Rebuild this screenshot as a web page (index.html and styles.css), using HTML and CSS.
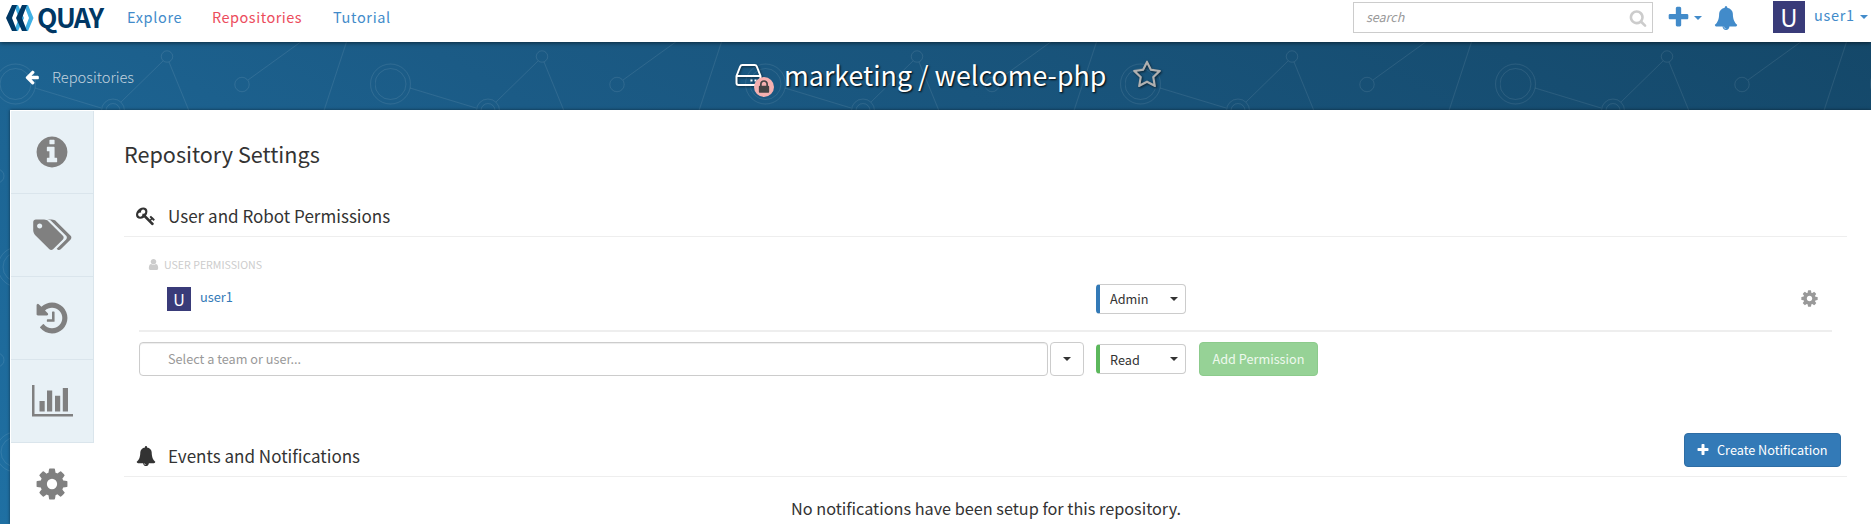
FILE: index.html
```html
<!DOCTYPE html>
<html lang="en">
<head>
<meta charset="utf-8">
<title>marketing / welcome-php</title>
<link rel="stylesheet" href="styles.css">
</head>
<body>
<svg class="defs" width="0" height="0">
  <symbol id="info" viewBox="0 0 1792 1792"><path d="M1152 1376v-160q0-14-9-23t-23-9h-96v-512q0-14-9-23t-23-9h-320q-14 0-23 9t-9 23v160q0 14 9 23t23 9h96v320h-96q-14 0-23 9t-9 23v160q0 14 9 23t23 9h448q14 0 23-9t9-23zm-128-896v-160q0-14-9-23t-23-9h-192q-14 0-23 9t-9 23v160q0 14 9 23t23 9h192q14 0 23-9t9-23zm640 416q0 209-103 385.5t-279.5 279.5-385.5 103-385.5-103-279.5-279.5-103-385.5 103-385.5 279.5-279.5 385.5-103 385.5 103 279.5 279.5 103 385.5z"/></symbol>
  <symbol id="tags" viewBox="0 0 1920 1792"><path d="M448 448q0-53-37.500-90.500t-90.500-37.500-90.500 37.500-37.500 90.500 37.500 90.500 90.500 37.500 90.500-37.500 37.500-90.500zm1067 576q0 53-37 90l-491 492q-39 37-91 37-53 0-90-37l-715-716q-38-37-64.500-101t-26.500-117v-416q0-52 38-90t90-38h416q53 0 117 26.500t102 64.500l715 714q37 39 37 91zm384 0q0 53-37 90l-491 492q-39 37-91 37-36 0-59-14t-53-45l470-470q37-37 37-90 0-52-37-91l-715-714q-38-38-102-64.500t-117-26.500h224q53 0 117 26.500t102 64.500l715 714q37 39 37 91z"/></symbol>
  <symbol id="history" viewBox="0 0 1792 1792"><path d="M1664 896q0 156-61 298t-164 245-245 164-298 61q-172 0-327-72.500t-264-204.500q-7-10-6.500-22.500t8.500-20.500l137-138q10-9 25-9 16 2 23 12 73 95 179 147t225 52q104 0 198.500-40.500t163.500-109.500 109.500-163.500 40.500-198.500-40.500-198.500-109.500-163.500-163.500-109.500-198.500-40.500q-98 0-188 35.500t-160 101.500l137 138q31 30 14 69-17 40-59 40h-448q-26 0-45-19t-19-45v-448q0-42 40-59 39-17 69 14l130 129q107-101 244.500-156.500t284.500-55.500q156 0 298 61t245 164 164 245 61 298zm-640-288v448q0 14-9 23t-23 9h-320q-14 0-23-9t-9-23v-64q0-14 9-23t23-9h224v-352q0-14 9-23t23-9h64q14 0 23 9t9 23z"/></symbol>
  <symbol id="chart" viewBox="0 0 41 32"><path d="M0 0h2.500v29h38.500v2.500h-41zM7.500 16h5.200v10.500h-5.200zM15 5.500h5.200v21h-5.200zM23 10.800h5.200v15.700h-5.200zM30.800 3h5.200v23.500h-5.200z"/></symbol>
  <symbol id="cog" viewBox="0 0 1792 1792"><path d="M1152 896q0-106-75-181t-181-75-181 75-75 181 75 181 181 75 181-75 75-181zm512-109v222q0 12-8 23t-20 13l-185 28q-19 54-39 91 35 50 107 138 10 12 10 25t-9 23q-27 37-99 108t-94 71q-12 0-26-9l-138-108q-44 23-91 38-16 136-29 186-7 28-36 28h-222q-14 0-24.500-8.500t-11.500-21.500l-28-184q-49-16-90-37l-141 107q-10 9-25 9-14 0-25-11-126-114-165-168-7-10-7-23 0-12 8-23 15-21 51-66.500t54-70.500q-27-50-41-99l-183-27q-13-2-21-12.500t-8-23.500v-222q0-12 8-23t19-13l186-28q14-46 39-92-40-57-107-138-10-12-10-24 0-10 9-23 26-36 98.500-107.500t94.500-71.500q13 0 26 10l138 107q44-23 91-38 16-136 29-186 7-28 36-28h222q14 0 24.500 8.500t11.500 21.500l28 184q49 16 90 37l142-107q9-9 24-9 13 0 25 10 129 119 165 170 7 8 7 22 0 12-8 23-15 21-51 66.500t-54 70.500q26 50 41 98l183 28q13 2 21 12.500t8 23.500z"/></symbol>
  <symbol id="bell" viewBox="0 0 1792 1792"><path d="M912 1696q0-16-16-16-59 0-101.500-42.500t-42.500-101.500q0-16-16-16t-16 16q0 73 51.500 124.500t124.500 51.500q16 0 16-16zm816-288q0 52-38 90t-90 38h-448q0 106-75 181t-181 75-181-75-75-181h-448q-52 0-90-38t-38-90q50-42 91-88t85-119.500 74.500-158.500 50-206 19.500-260q0-152 117-282.500t307-158.500q-8-19-8-39 0-40 28-68t68-28 68 28 28 68q0 20-8 39 190 28 307 158.500t117 282.500q0 139 19.500 260t50 206 74.500 158.500 85 119.500 91 88z"/></symbol>
  <symbol id="plus" viewBox="0 0 1792 1792"><path d="M1600 736v192q0 40-28 68t-68 28h-416v416q0 40-28 68t-68 28h-192q-40 0-68-28t-28-68v-416h-416q-40 0-68-28t-28-68v-192q0-40 28-68t68-28h416v-416q0-40 28-68t68-28h192q40 0 68 28t28 68v416h416q40 0 68 28t28 68z"/></symbol>
  <symbol id="user" viewBox="0 0 1792 1792"><path d="M1536 1399q0 109-62.500 187t-150.500 78h-854q-88 0-150.500-78t-62.500-187q0-85 8.500-160.500t31.500-152 58.500-131 94-89 134.500-34.500q131 128 313 128t313-128q76 0 134.500 34.500t94 89 58.500 131 31.500 152 8.500 160.500zm-256-887q0 159-112.500 271.500t-271.500 112.500-271.500-112.500-112.500-271.500 112.500-271.500 271.500-112.500 271.500 112.500 112.500 271.500z"/></symbol>
  <symbol id="search" viewBox="0 0 1792 1792"><path d="M1216 832q0-185-131.500-316.500t-316.500-131.500-316.500 131.500-131.500 316.500 131.500 316.500 316.500 131.500 316.500-131.500 131.500-316.500zm512 832q0 52-38 90t-90 38q-54 0-90-38l-343-342q-179 124-399 124-143 0-273.500-55.500t-225-150-150-225-55.500-273.500 55.500-273.500 150-225 225-150 273.500-55.500 273.500 55.500 225 150 150 225 55.500 273.500q0 220-124 399l343 343q37 37 37 90z"/></symbol>
  <symbol id="arrow" viewBox="0 0 1792 1792"><path d="M1664 896v128q0 53-32.500 90.500t-84.500 37.500h-704l293 294q38 36 38 90t-38 90l-75 76q-37 37-90 37-52 0-91-37l-651-652q-37-37-37-90 0-52 37-91l651-650q38-38 91-38 52 0 90 38l75 74q38 38 38 91t-38 91l-293 293h704q52 0 84.500 37.500t32.500 90.500z"/></symbol>
  <symbol id="key" viewBox="0 0 1792 1792"><path d="M832 512q0-80-56-136t-136-56-136 56-56 136q0 42 19 83-41-19-83-19-80 0-136 56t-56 136 56 136 136 56 136-56 56-136q0-42-19-83 41 19 83 19 80 0 136-56t56-136zm851 704q0 17-49 66t-66 49q-9 0-28.500-16t-36.500-33-38.500-40-24.500-26l-96 96 220 220q28 28 28 68 0 42-39 81t-81 39q-40 0-68-28l-671-671q-176 131-365 131-163 0-265.500-102.500t-102.500-265.500q0-160 95-313t248-248 313-95q163 0 265.500 102.500t102.500 265.500q0 189-131 365l355 355 96-96q-3-3-26-24.500t-40-38.500-33-36.500-16-28.500q0-17 49-66t66-49q13 0 23 10 6 6 46 44.500t82 79.500 86.500 86 73 78 28.500 41z"/></symbol>
  <symbol id="star" viewBox="0 0 1792 1792"><path d="M1201 1004l306-297-422-62-189-382-189 382-422 62 306 297-73 421 378-199 377 199zm527-357q0 22-26 48l-363 354 86 500q1 7 1 20 0 50-41 50-19 0-40-12l-449-236-449 236q-22 12-40 12-21 0-31.500-14.500t-10.500-35.500q0-6 2-20l86-500-364-354q-25-27-25-48 0-37 56-46l502-73 225-455q19-41 49-41t49 41l225 455 502 73q56 9 56 46z"/></symbol>
  <symbol id="lock" viewBox="0 0 1792 1792"><path d="M640 768h512v-192q0-106-75-181t-181-75-181 75-75 181v192zm832 96v576q0 40-28 68t-68 28h-960q-40 0-68-28t-28-68v-576q0-40 28-68t68-28h32v-192q0-184 132-316t316-132 316 132 132 316v192h32q40 0 68 28t28 68z"/></symbol>
</svg>

<svg class="backdrop" width="1871" height="524">
  <defs>
    <pattern id="net" width="375" height="524" patternUnits="userSpaceOnUse">
      <g fill="none" stroke="#fff" stroke-opacity=".085">
        <circle cx="15.500" cy="84" r="20"/><circle cx="15.500" cy="84" r="15.500"/>
        <circle cx="390.500" cy="84" r="20"/>
        <circle cx="113" cy="110.500" r="11.500"/><circle cx="113" cy="110.500" r="7"/>
        <circle cx="167" cy="56.500" r="5.700"/><circle cx="242" cy="84.500" r="7.200"/>
        <path d="M35 88l66 20M121 102l42-41M169 62l27 66M248 80l72-52M355 16l-39 119"/>
        <path d="M320 28l-22 16" opacity="0"/>
        <circle cx="-3" cy="176" r="7"/><circle cx="18" cy="267" r="20"/><circle cx="18" cy="267" r="15"/>
        <circle cx="-3" cy="360" r="7"/><circle cx="16" cy="452" r="20"/><circle cx="16" cy="452" r="15"/>
      </g>
    </pattern>
  </defs>
  <rect width="1871" height="524" fill="url(#net)"/>
</svg>

<header class="navbar">
  <div class="brand">
    <svg width="28" height="27" viewBox="0 0 28 27">
      <path fill="#3fb0e4" d="M8 0h4l6 13-6 13H8l5-13zM18 0h4l5.500 13L22 26h-4l5-13z"/>
      <path fill="#003764" d="M6 0h5L6 13l5 13H6L0 13zM16 0h5l-5 13 5 13h-5l-6-13z"/>
    </svg>
    <span class="brand-name">QUAY</span>
  </div>
  <nav class="links"><a class="l1">Explore</a><a class="l2 active">Repositories</a><a class="l3">Tutorial</a></nav>
  <div class="search"><span>search</span><svg class="icon" width="18" height="18"><use href="#search"/></svg></div>
  <svg class="icon nav-plus" width="25" height="25"><use href="#plus"/></svg>
  <i class="caret nav-caret"></i>
  <svg class="icon nav-bell" width="24" height="24"><use href="#bell"/></svg>
  <span class="avatar avatar-lg">U</span>
  <span class="account">user1</span>
  <i class="caret account-caret"></i>
</header>

<div class="titlebar">
  <a class="back"><svg class="icon" width="16" height="16"><use href="#arrow"/></svg><span>Repositories</span></a>
  <div class="repo">
    <div class="drive">
      <svg width="28" height="24" viewBox="0 0 28 24"><g fill="none" stroke="#fff" stroke-width="2" stroke-linejoin="round"><path d="M1.500 12 5.200 2.500Q5.800 1 7.300 1h12.400q1.500 0 2.100 1.500L25.500 12v7q0 2-2 2h-20q-2 0-2-2zM1.500 12h24"/></g><path fill="#fff" d="M15.500 15.500h2v2h-2zM19.500 15.500h2v2h-2z"/></svg>
      <span class="private"><svg width="16" height="16"><use href="#lock"/></svg></span>
    </div>
    <h1>marketing / welcome-php</h1>
    <svg class="star" width="30" height="30"><use href="#star"/></svg>
  </div>
</div>

<div class="panel">
  <aside class="tabs">
    <a><svg width="36" height="36"><use href="#info"/></svg></a>
    <a><svg width="39" height="36"><use href="#tags"/></svg></a>
    <a><svg width="36" height="36"><use href="#history"/></svg></a>
    <a><svg width="41" height="32"><use href="#chart"/></svg></a>
    <a class="current"><svg width="36" height="36"><use href="#cog"/></svg></a>
  </aside>
  <main>
    <h2>Repository Settings</h2>
    <h3 class="head-perm"><svg width="20" height="20"><use href="#key"/></svg><span>User and Robot Permissions</span></h3>
    <div class="perms">
      <div class="group"><svg width="13" height="13"><use href="#user"/></svg><span>USER PERMISSIONS</span></div>
      <div class="member">
        <span class="avatar">U</span><a>user1</a>
        <div class="role admin"><span>Admin</span><i class="caret"></i></div>
        <svg class="gear" width="19" height="19"><use href="#cog"/></svg>
      </div>
      <div class="add">
        <div class="field">Select a team or user...</div>
        <div class="drop"><i class="caret"></i></div>
        <div class="role read"><span>Read</span><i class="caret"></i></div>
        <div class="btn-add">Add Permission</div>
      </div>
    </div>
    <h3 class="head-events"><svg width="20" height="20"><use href="#bell"/></svg><span>Events and Notifications</span>
      <div class="btn-create"><svg width="14" height="14"><use href="#plus"/></svg><b>Create Notification</b></div>
    </h3>
    <p class="empty">No notifications have been setup for this repository.</p>
  </main>
</div>
</body>
</html>
```
FILE: styles.css
```css
* { box-sizing: border-box; }
body {
  margin: 0;
  width: 1871px;
  height: 524px;
  overflow: hidden;
  position: relative;
  font-family: "Noto Sans CJK SC", "Noto Sans", sans-serif;
  color: #333;
  background: linear-gradient(30deg, #1f70a3 0%, #1b5b86 45%, #144768 100%);
}
svg { fill: currentColor; flex: none; display: block; }
.defs { position: absolute; }
.backdrop { position: absolute; left: 0; top: 0; }
.caret {
  width: 0;
  height: 0;
  flex: none;
  border: 4px solid transparent;
  border-top-color: currentColor;
  border-bottom: 0;
}

.navbar {
  position: relative;
  height: 42px;
  display: flex;
  align-items: flex-start;
  background: #fff;
  color: #428bca;
  box-shadow: 0 1px 4px rgba(0, 0, 0, .55);
}
.brand { display: flex; width: 127px; padding: 5px 0 0 6px; }
.brand-name {
  margin: -2px 0 0 3px;
  font: bold 26.500px/28px "Noto Sans CJK SC", sans-serif;
  letter-spacing: -1.500px;
  color: #003764;
}
.links { display: flex; flex: 1; font-size: 14.500px; line-height: 20px; padding-top: 7px; letter-spacing: .65px; }
.l1 { width: 85px; }
.l2 { width: 121px; letter-spacing: .5px; }
.links .active { color: #ec4c5c; }
.search {
  width: 300px;
  height: 31px;
  margin-top: 2px;
  padding: 0 5px 0 12px;
  display: flex;
  align-items: center;
  justify-content: space-between;
  border: 1px solid #ccc;
  color: #ccc;
}
.search span { margin-top: -2px; font-size: 12.500px; font-style: italic; color: #999; }
.nav-plus { margin: 5px 0 0 13px; }
.nav-caret { margin: 16px 0 0 3px; }
.nav-bell { margin: 6px 0 0 12px; }
.avatar {
  display: block;
  width: 24px;
  height: 24px;
  font-size: 16px;
  line-height: 24px;
  text-align: center;
  color: #fff;
  background: #393b79;
}
.avatar-lg { width: 32px; height: 32px; margin: 1px 0 0 35px; font-size: 24px; line-height: 32px; }
.account { width: 47px; margin: 5px 0 0 9px; font-size: 14.500px; line-height: 20px; letter-spacing: .7px; }
.account-caret { margin: 15px 3px 0 -1px; }

.titlebar { position: relative; height: 68px; display: flex; align-items: center; }
.back { display: flex; align-items: center; width: 733px; padding: 2px 0 0 24px; color: #fff; }
.back span { margin-left: 12px; font-size: 14.700px; font-weight: 300; line-height: 20px; color: #c3d3df; }
.repo { display: flex; align-items: center; color: #fff; }
.drive { position: relative; width: 51px; height: 36px; padding: 6px 0 0 2px; }
.drive > svg { filter: drop-shadow(1px 1px 1px rgba(0, 0, 0, .5)); }
.private {
  position: absolute;
  left: 21px;
  top: 19px;
  width: 20px;
  height: 20px;
  padding: 2px;
  border-radius: 50%;
  background: #f5b0b0;
  color: #444;
}
h1 { margin: -2px 0 0; width: 348px; font-size: 26.800px; font-weight: 400; line-height: 40px; white-space: nowrap; text-shadow: 1px 1px 2px #000; }
.star { margin-top: -2px; color: #b0b0b0; filter: drop-shadow(1px 1px 1px rgba(0, 0, 0, .6)); }

.panel {
  position: relative;
  display: flex;
  height: 414px;
  margin-left: 10px;
  padding-left: 1px;
  background: #fff;
  box-shadow: 0 0 3px rgba(0, 0, 0, .5);
}
.tabs { width: 83px; padding-top: 1px; color: #808080; }
.tabs a {
  height: 83px;
  display: flex;
  align-items: center;
  justify-content: center;
  background: #e8f1f6;
  border-right: 1px solid #dae5ec;
  border-bottom: 1px solid #dae5ec;
}
.tabs .current { padding: 0 1px 2px 0; background: #fff; border: 0; }
main { flex: 1; padding: 0 24px 0 30px; }
h2 { margin: 29px 0 0; font-size: 21.600px; font-weight: 400; line-height: 30px; }
h3 { display: flex; align-items: center; margin: 0; padding-left: 12px; border-bottom: 1px solid #eee; font-size: 17.050px; font-weight: 400; }
h3 span { flex: 1; margin-left: 12px; line-height: 24px; }
.head-perm { height: 41px; margin-top: 27px; padding-bottom: 1px; }
.perms { height: 193px; padding: 17px 15px 0; }
.group { display: flex; align-items: center; height: 20px; padding-left: 8px; font-size: 10.600px; color: #ccc; }
.group span { margin-left: 4px; }
.member { display: flex; align-items: center; height: 57px; margin-top: 1px; padding: 0 13px 8px 28px; border-bottom: 2px solid #eee; }
.member a { width: 896px; margin: -4px 0 0 9px; font-size: 12.800px; color: #337ab7; }
.gear { margin-left: auto; color: #999; }
.role {
  width: 90px;
  height: 30px;
  display: flex;
  align-items: center;
  justify-content: space-between;
  padding: 0 7px 0 10px;
  border: 1px solid #ccc;
  border-left: 4px solid #337ab7;
  border-radius: 4px;
  font-size: 12.700px;
}
.read { border-left-color: #5cb85c; margin-left: 12px; }
.add { display: flex; align-items: center; margin-top: 10px; font-size: 12.700px; }
.field { width: 909px; height: 34px; padding-left: 28px; border: 1px solid #ccc; border-radius: 4px; line-height: 32px; color: #999; box-shadow: inset 0 1px 1px rgba(0, 0, 0, .075); }
.drop { width: 34px; height: 34px; margin-left: 2px; display: flex; align-items: center; justify-content: center; border: 1px solid #ccc; border-radius: 4px; }
.btn-add { width: 119px; height: 34px; margin-left: 13px; border: 1px solid #8ccb8c; border-radius: 4px; background: #96d296; color: #eef9ee; text-align: center; line-height: 32px; }
.head-events { height: 47px; padding-right: 6px; padding-top: 5px; }
.btn-create { width: 157px; height: 34px; margin-top: -12px; display: flex; align-items: center; padding-left: 11px; border: 1px solid #2e6da4; border-radius: 4px; background: #337ab7; color: #fff; }
.btn-create b { margin-left: 7px; font-size: 12.700px; font-weight: 400; }
.empty { margin: 19px 0 0; padding-left: 1px; text-align: center; font-size: 16.250px; line-height: 24px; }
```
